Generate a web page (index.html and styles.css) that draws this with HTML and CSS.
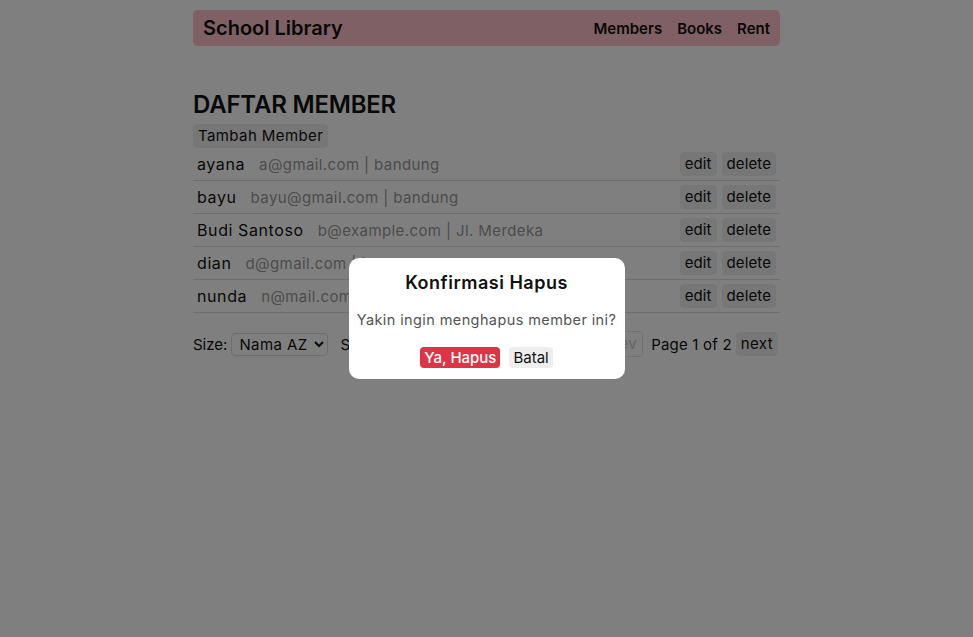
FILE: index.html
```html
<!DOCTYPE html>
<html lang="id">
<head>
<meta charset="utf-8">
<title>School Library</title>
<link rel="stylesheet" href="styles.css">
</head>
<body>
<div class="container">
  <nav class="navbar">
    <div class="brand">School Library</div>
    <div class="links">
      <a href="#">Members</a>
      <a href="#">Books</a>
      <a href="#">Rent</a>
    </div>
  </nav>

  <h2 class="title">DAFTAR MEMBER</h2>
  <button class="btn">Tambah Member</button>

  <ul class="list">
    <li class="row">
      <div class="info"><span class="name">ayana</span><span class="meta">a@gmail.com | bandung</span></div>
      <div class="actions"><button class="btn">edit</button><button class="btn">delete</button></div>
    </li>
    <li class="row">
      <div class="info"><span class="name">bayu</span><span class="meta">bayu@gmail.com | bandung</span></div>
      <div class="actions"><button class="btn">edit</button><button class="btn">delete</button></div>
    </li>
    <li class="row">
      <div class="info"><span class="name">Budi Santoso</span><span class="meta">b@example.com | Jl. Merdeka</span></div>
      <div class="actions"><button class="btn">edit</button><button class="btn">delete</button></div>
    </li>
    <li class="row">
      <div class="info"><span class="name">dian</span><span class="meta">d@gmail.com | jakarta</span></div>
      <div class="actions"><button class="btn">edit</button><button class="btn">delete</button></div>
    </li>
    <li class="row">
      <div class="info"><span class="name">nunda</span><span class="meta">n@mail.com | bogor</span></div>
      <div class="actions"><button class="btn">edit</button><button class="btn">delete</button></div>
    </li>
  </ul>

  <div class="controls">
    <div class="left">
      <label class="lbl">Size:</label>
      <select class="sel"><option>Nama AZ</option></select>
      <label class="lbl">Size:</label>
      <select class="sel"><option>5</option></select>
    </div>
    <div class="right">
      <button class="btn btn-disabled" disabled>prev</button>
      <span class="page">Page 1 of 2</span>
      <button class="btn">next</button>
    </div>
  </div>
</div>

<div class="overlay">
  <div class="modal">
    <h3 class="modal-title">Konfirmasi Hapus</h3>
    <p class="modal-text">Yakin ingin menghapus member ini?</p>
    <div class="modal-actions">
      <button class="btn btn-danger">Ya, Hapus</button>
      <button class="btn">Batal</button>
    </div>
  </div>
</div>
</body>
</html>
```
FILE: styles.css
```css
* { box-sizing: border-box; }

body {
  margin: 0;
  background: #ffffff;
  color: #111;
  font-family: "Inter", "Noto Sans", sans-serif;
  font-size: 15px;
  letter-spacing: 0.4px;
}

.container {
  width: 587px;
  margin: 0 auto;
  padding-top: 10px;
}

.navbar {
  height: 36px;
  background: pink;
  border-radius: 5px;
  padding: 0 10px;
  display: flex;
  align-items: center;
  justify-content: space-between;
  letter-spacing: 0;
}

.brand {
  font-size: 20px;
  font-weight: 600;
}

.links {
  display: flex;
  gap: 15px;
}

.links a {
  color: #111;
  text-decoration: none;
  font-weight: 600;
  font-size: 15px;
}

.title {
  font-size: 24px;
  font-weight: 600;
  line-height: 30px;
  letter-spacing: -0.2px;
  margin: 44px 0 4px;
}

.btn {
  font-family: inherit;
  font-size: 15px;
  letter-spacing: 0.4px;
  line-height: 18px;
  padding: 3px 5px;
  background: #eeeeee;
  color: #111;
  border: none;
  border-radius: 4px;
}

.list {
  list-style: none;
  margin: 0;
  padding: 0;
}

.row {
  display: flex;
  align-items: center;
  justify-content: space-between;
  padding: 4px;
  border-bottom: 1px solid #dddddd;
}

.info {
  display: flex;
  align-items: baseline;
  gap: 14px;
}

.name {
  font-size: 16px;
  letter-spacing: 0.6px;
  color: #111;
}

.meta {
  color: #999999;
}

.actions {
  display: flex;
  gap: 5px;
}

.actions .btn { letter-spacing: 0.1px; }

.controls {
  margin-top: 18px;
  display: flex;
  justify-content: space-between;
  align-items: center;
}

.left, .right {
  display: flex;
  align-items: center;
  gap: 4px;
}

.right { margin-right: 2px; }

.lbl { letter-spacing: 0; }

.left .lbl + .sel + .lbl { margin-left: 8px; }

.sel {
  font-family: inherit;
  font-size: 15px;
  letter-spacing: 0.4px;
  height: 23px;
  padding: 0 3px;
  background: transparent;
  border: 1px solid #dddddd;
  border-radius: 4px;
  color: #111;
}

.btn-disabled {
  background: transparent;
  border: 1px solid #e5e5e5;
  color: #c8c8c8;
}

.page { margin: 0 0 0 4px; letter-spacing: 0.2px; }

.overlay {
  position: fixed;
  inset: 0;
  background: rgba(0, 0, 0, 0.5);
  display: flex;
  align-items: center;
  justify-content: center;
}

.modal {
  width: 276px;
  background: #fff;
  border-radius: 10px;
  padding: 14px 8px 11px;
  text-align: center;
}

.modal-title {
  margin: 0;
  font-size: 18px;
  line-height: 22px;
  font-weight: 600;
  letter-spacing: 0.5px;
}

.modal-text {
  margin: 16px 0 0;
  font-size: 14.5px;
  line-height: 20px;
  color: #555;
}

.modal-actions {
  margin-top: 17px;
  display: flex;
  justify-content: center;
  gap: 9px;
}

.modal-actions .btn {
  padding: 2px 4px;
  line-height: 17px;
  letter-spacing: 0;
}

.btn-danger {
  background: #dc3545;
  color: #fff;
  font-weight: 500;
}
```
